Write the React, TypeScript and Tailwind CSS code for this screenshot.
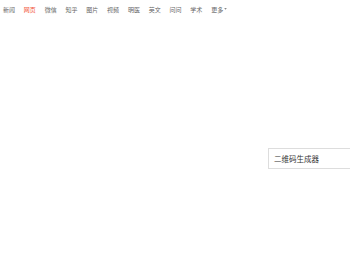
import React from 'react';

const tabs = ['新闻', '网页', '微信', '知乎', '图片', '视频', '明医', '英文', '问问', '学术'];

const App: React.FC = () => {
  return (
    <div className="w-[350px] h-[260px] bg-white overflow-hidden flex flex-col" style={{ fontFamily: '"Noto Sans CJK SC", "Liberation Sans", sans-serif' }}>
      <nav className="flex items-center h-[18px] pl-[3px] gap-[8.8px] text-[6px] text-[#666]">
        {tabs.map((t) => (
          <span key={t} className={t === '网页' ? 'text-[#f2543a]' : ''}>{t}</span>
        ))}
        <span className="flex items-center gap-[1px]">
          更多
          <svg width="3" height="2" viewBox="0 0 4 3" className="fill-[#888]">
            <path d="M0 0h4L2 2.5z" />
          </svg>
        </span>
      </nav>
      <div className="flex justify-end mt-[130px]">
        <div className="w-[82px] h-[21px] border border-[#ddd] border-r-0 flex items-center pl-[5px] text-[7.5px] text-[#333]">
          二维码生成器
        </div>
      </div>
    </div>
  );
};

export default App;
